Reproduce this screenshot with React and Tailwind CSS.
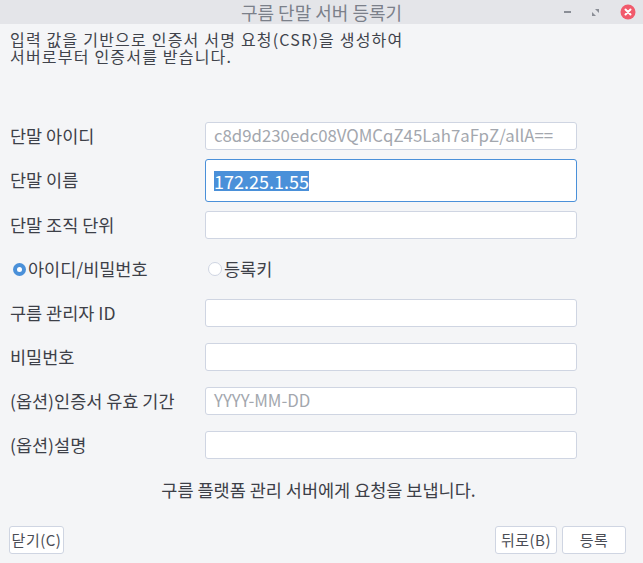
const font = { fontFamily: '"Noto Sans CJK KR", "Noto Sans", sans-serif' }

const rows = [
  { label: '구름 관리자 ID', value: '' },
  { label: '비밀번호', value: '' },
  { label: '(옵션)인증서 유효 기간', placeholder: 'YYYY-MM-DD' },
  { label: '(옵션)설명', value: '' },
]

function Field({ children, className = '' }) {
  return (
    <div className={`w-[372px] h-[28px] rounded-[3px] border border-[#cfd5e2] bg-white flex items-center px-2 text-[16.8px] whitespace-nowrap ${className}`}>
      {children}
    </div>
  )
}

function Btn({ children, className = '' }) {
  return (
    <div className={`h-[28px] rounded-[3px] border border-[#cfd5e2] bg-white flex items-center justify-center text-[15px] tracking-[0.5px] whitespace-nowrap text-[#4a4d55] ${className}`}>
      {children}
    </div>
  )
}

export default function App() {
  return (
    <div className="w-[643px] h-[563px] bg-[#f4f5f7] flex flex-col text-[#3d4048]" style={font}>

      {/* title bar */}
      <div className="h-[24px] bg-[#e4e5e9] flex items-center relative shrink-0">
        <div className="flex-1 text-center text-[18px] text-[#7b808a] leading-none">구름 단말 서버 등록기</div>
        <div className="absolute right-[7px] top-[4px] flex items-center gap-[20px]">
          <div className="w-[7px] h-[2px] bg-[#8a8e96]" />
          <svg width="9" height="9" viewBox="0 0 9 9">
            <path d="M1 4 L1 8 L5 8 Z M8 5 L8 1 L4 1 Z" fill="#8a8e96" />
          </svg>
          <svg width="16" height="16" viewBox="0 0 16 16">
            <circle cx="8" cy="8" r="7.5" fill="#f15a6c" />
            <path d="M5.5 5.5 L10.5 10.5 M10.5 5.5 L5.5 10.5" stroke="#fff" strokeWidth="2" strokeLinecap="round" />
          </svg>
        </div>
      </div>

      {/* description */}
      <div className="px-[10px] pt-[7px] text-[16px] tracking-[1.2px] leading-[17px] text-[#40434b]">
        <p>입력 값을 기반으로 인증서 서명 요청(CSR)을 생성하여</p>
        <p>서버로부터 인증서를 받습니다.</p>
      </div>

      {/* form */}
      <div className="pl-[10px] pt-[57px] flex flex-col text-[17.5px]">
        <div className="flex items-center h-[28px]">
          <span className="w-[195px]">단말 아이디</span>
          <Field className="bg-[#f8f9fa] text-[#a3a7ae]">c8d9d230edc08VQMCqZ45Lah7aFpZ/allA==</Field>
        </div>
        <div className="flex items-center h-[43px] mt-[9px]">
          <span className="w-[195px]">단말 이름</span>
          <div className="w-[372px] h-[43px] rounded-[3px] border border-[#4a90d9] bg-white flex items-center px-2 text-[18px]">
            <span className="bg-[#4a90d9] text-white leading-[20px]">172.25.1.55</span>
          </div>
        </div>
        <div className="flex items-center h-[28px] mt-[9px]">
          <span className="w-[195px]">단말 조직 단위</span>
          <Field />
        </div>
        <div className="flex items-center h-[28px] mt-[16px]">
          <div className="w-[195px] flex items-center">
            <div className="ml-[3px] w-[13px] h-[13px] rounded-full bg-[#4a90d9] flex items-center justify-center">
              <div className="w-[5px] h-[5px] rounded-full bg-white" />
            </div>
            <span className="ml-[2px]">아이디/비밀번호</span>
          </div>
          <div className="flex items-center ml-[3px]">
            <div className="w-[14px] h-[14px] rounded-full border border-[#cfd5e2] bg-white" />
            <span className="ml-[2px]">등록키</span>
          </div>
        </div>
        {rows.map(r => (
          <div key={r.label} className="flex items-center h-[28px] mt-[16px]">
            <span className="w-[195px]">{r.label}</span>
            <Field>
              {r.placeholder && <span className="text-[#a3a7ae]">{r.placeholder}</span>}
            </Field>
          </div>
        ))}
      </div>

      <div className="text-center text-[17.5px] mt-[18px] pr-[6px]">구름 플랫폼 관리 서버에게 요청을 보냅니다.</div>

      {/* buttons */}
      <div className="mt-auto mb-[9px] px-[9px] flex items-center">
        <Btn className="w-[55px]">닫기(C)</Btn>
        <div className="flex-1" />
        <Btn className="w-[62px]">뒤로(B)</Btn>
        <Btn className="w-[64px] ml-[5px] mr-[8px]">등록</Btn>
      </div>
    </div>
  )
}
